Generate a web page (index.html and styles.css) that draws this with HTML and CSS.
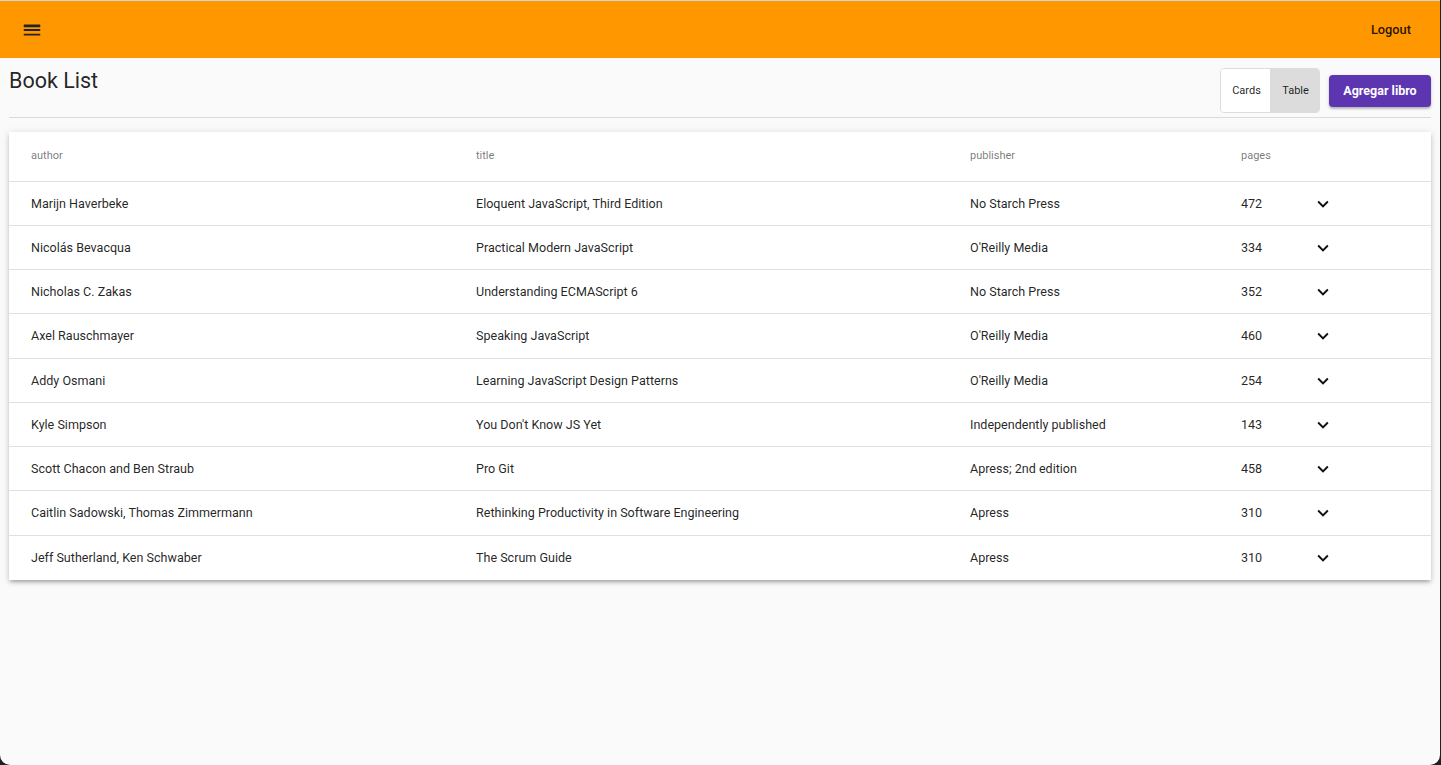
FILE: index.html
```html
<!DOCTYPE html>
<html lang="es">
<head>
<meta charset="utf-8">
<title>Book List</title>
<link rel="stylesheet" href="styles.css">
</head>
<body>
<div class="app">
  <header class="toolbar">
    <button class="icon-btn" aria-label="menu">
      <svg width="22" height="22" viewBox="0 0 24 24"><path d="M3 18h18v-2H3v2zm0-5h18v-2H3v2zm0-6v2h18V6H3z" fill="#222"/></svg>
    </button>
    <span class="spacer"></span>
    <button class="logout">Logout</button>
  </header>
  <main class="content">
    <div class="page-head">
      <h1 class="title">Book List</h1>
      <div class="actions">
        <div class="toggle-group">
          <button class="toggle">Cards</button>
          <button class="toggle selected">Table</button>
        </div>
        <button class="add-btn">Agregar libro</button>
      </div>
    </div>
    <hr class="divider">
    <div class="card">
      <div class="row head">
        <div>author</div><div>title</div><div>publisher</div><div>pages</div><div></div>
      </div>
      <div class="row"><div>Marijn Haverbeke</div><div>Eloquent JavaScript, Third Edition</div><div>No Starch Press</div><div>472</div><div class="chev"><svg width="22" height="22" viewBox="0 0 24 24"><path d="M16.59 8.59L12 13.17 7.41 8.59 6 10l6 6 6-6z" fill="#111"/></svg></div></div>
      <div class="row"><div>Nicolás Bevacqua</div><div>Practical Modern JavaScript</div><div>O'Reilly Media</div><div>334</div><div class="chev"><svg width="22" height="22" viewBox="0 0 24 24"><path d="M16.59 8.59L12 13.17 7.41 8.59 6 10l6 6 6-6z" fill="#111"/></svg></div></div>
      <div class="row"><div>Nicholas C. Zakas</div><div>Understanding ECMAScript 6</div><div>No Starch Press</div><div>352</div><div class="chev"><svg width="22" height="22" viewBox="0 0 24 24"><path d="M16.59 8.59L12 13.17 7.41 8.59 6 10l6 6 6-6z" fill="#111"/></svg></div></div>
      <div class="row"><div>Axel Rauschmayer</div><div>Speaking JavaScript</div><div>O'Reilly Media</div><div>460</div><div class="chev"><svg width="22" height="22" viewBox="0 0 24 24"><path d="M16.59 8.59L12 13.17 7.41 8.59 6 10l6 6 6-6z" fill="#111"/></svg></div></div>
      <div class="row"><div>Addy Osmani</div><div>Learning JavaScript Design Patterns</div><div>O'Reilly Media</div><div>254</div><div class="chev"><svg width="22" height="22" viewBox="0 0 24 24"><path d="M16.59 8.59L12 13.17 7.41 8.59 6 10l6 6 6-6z" fill="#111"/></svg></div></div>
      <div class="row"><div>Kyle Simpson</div><div>You Don't Know JS Yet</div><div>Independently published</div><div>143</div><div class="chev"><svg width="22" height="22" viewBox="0 0 24 24"><path d="M16.59 8.59L12 13.17 7.41 8.59 6 10l6 6 6-6z" fill="#111"/></svg></div></div>
      <div class="row"><div>Scott Chacon and Ben Straub</div><div>Pro Git</div><div>Apress; 2nd edition</div><div>458</div><div class="chev"><svg width="22" height="22" viewBox="0 0 24 24"><path d="M16.59 8.59L12 13.17 7.41 8.59 6 10l6 6 6-6z" fill="#111"/></svg></div></div>
      <div class="row"><div>Caitlin Sadowski, Thomas Zimmermann</div><div>Rethinking Productivity in Software Engineering</div><div>Apress</div><div>310</div><div class="chev"><svg width="22" height="22" viewBox="0 0 24 24"><path d="M16.59 8.59L12 13.17 7.41 8.59 6 10l6 6 6-6z" fill="#111"/></svg></div></div>
      <div class="row last"><div>Jeff Sutherland, Ken Schwaber</div><div>The Scrum Guide</div><div>Apress</div><div>310</div><div class="chev"><svg width="22" height="22" viewBox="0 0 24 24"><path d="M16.59 8.59L12 13.17 7.41 8.59 6 10l6 6 6-6z" fill="#111"/></svg></div></div>
    </div>
  </main>
</div>
</body>
</html>
```
FILE: styles.css
```css
* { box-sizing: border-box; }
html, body { margin: 0; padding: 0; }
body {
  background: #1f1f1f;
  font-family: Roboto, "Liberation Sans", Arial, sans-serif;
  color: rgba(0,0,0,0.87);
}
.app {
  width: 1440px;
  height: 765px;
  background: #fafafa;
  border-top: 1px solid #d4d4d4;
  border-radius: 0 0 10px 10px;
  overflow: hidden;
}
.toolbar {
  height: 57px;
  background: #ff9800;
  display: flex;
  align-items: center;
  padding: 0 20px 0 21px;
}
.icon-btn {
  border: 0;
  background: none;
  padding: 0;
  width: 22px;
  height: 22px;
  display: flex;
  margin-top: 1px;
}
.spacer { flex: 1; }
.logout {
  border: 0;
  background: none;
  font-family: inherit;
  font-size: 12.8px;
  font-weight: 500;
  color: rgba(0,0,0,0.87);
  padding: 0 9px;
  margin-top: 0;
}
.content { padding: 0 9px; }
.page-head {
  display: flex;
  justify-content: space-between;
  align-items: flex-start;
  padding-top: 10px;
}
.title {
  margin: 0;
  padding-top: 1px;
  font-size: 21.5px;
  line-height: 24px;
  font-weight: 400;
  color: rgba(0,0,0,0.87);
}
.actions {
  display: flex;
  align-items: center;
  gap: 9px;
}
.toggle-group {
  display: flex;
  height: 45px;
  border: 1px solid #dcdcdc;
  border-radius: 4px;
  overflow: hidden;
}
.toggle {
  border: 0;
  background: #fff;
  font-family: inherit;
  font-size: 11px;
  color: rgba(0,0,0,0.87);
  width: 49px;
  padding: 0 0 0 2px;
}
.toggle.selected { background: #dcdcdc; width: 49px; padding: 0 0 0 2px; }
.add-btn {
  height: 32px;
  width: 102px;
  border: 0;
  border-radius: 4px;
  background: #5e35b1;
  color: #fff;
  font-family: inherit;
  font-size: 12.5px;
  font-weight: 700;
  box-shadow: 0 2px 2px rgba(0,0,0,0.2), 0 1px 4px rgba(0,0,0,0.12);
}
.divider {
  margin: 4px 0 0;
  border: 0;
  border-top: 1px solid #dadada;
}
.card {
  margin-top: 14px;
  background: #fff;
  box-shadow: 0 3px 3px -2px rgba(0,0,0,0.2), 0 3px 4px 0 rgba(0,0,0,0.14), 0 1px 8px 0 rgba(0,0,0,0.12);
}
.row {
  display: grid;
  grid-template-columns: 445px 494px 271px 71px 22px 1fr;
  align-items: center;
  padding-left: 22px;
  height: 44.25px;
  border-bottom: 1px solid #e0e0e0;
  font-size: 12.55px;
}
.row.head {
  height: 49.5px;
  font-size: 11px;
  color: rgba(0,0,0,0.54);
  padding-bottom: 1px;
}
.row.last { border-bottom: 0; }
.chev { display: flex; padding-top: 1px; }
```
